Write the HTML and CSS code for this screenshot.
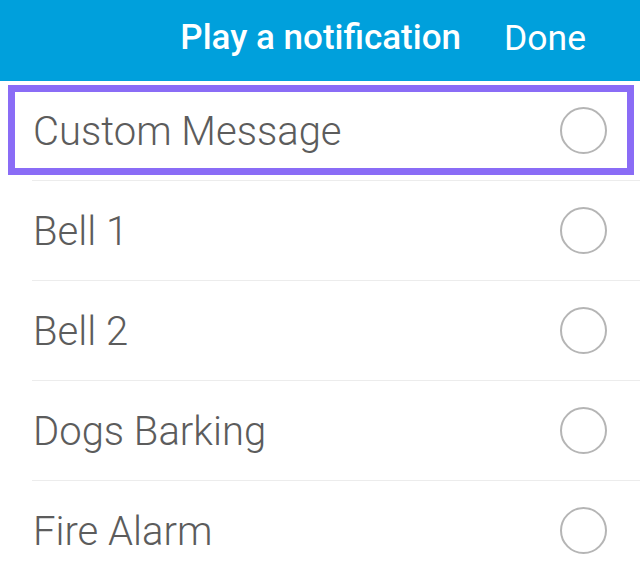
FILE: index.html
```html
<!DOCTYPE html>
<html lang="en">
<head>
    <meta charset="UTF-8">
    <meta name="viewport" content="width=device-width, initial-scale=1.0">
    <title>Play a notification</title>
    <link rel="stylesheet" href="styles.css">
</head>
<body>
    <div class="sound-picker">
        <div class="header">
            <span class="header-title">Play a notification</span>
            <button class="done-button">Done</button>
        </div>
        <ul class="options">
            <li class="option option-active">
                <div class="option-outline">
                    <span class="option-label">Custom Message</span>
                    <span class="radio"></span>
                </div>
            </li>
            <li class="option">
                <span class="option-label">Bell 1</span>
                <span class="radio"></span>
            </li>
            <li class="option">
                <span class="option-label">Bell 2</span>
                <span class="radio"></span>
            </li>
            <li class="option">
                <span class="option-label">Dogs Barking</span>
                <span class="radio"></span>
            </li>
            <li class="option">
                <span class="option-label">Fire Alarm</span>
                <span class="radio"></span>
            </li>
        </ul>
    </div>
</body>
</html>
```

FILE: styles.css
```css
body {
    margin: 0;
    font-family: Roboto, "Liberation Sans", Arial, sans-serif;
    background-color: #fff;
    color: #5c5c5c;
}

.sound-picker {
    width: 640px;
    height: 576px;
    overflow: hidden;
}

.header {
    background-color: #00a0dc;
    color: white;
    height: 81px;
    display: flex;
    justify-content: flex-end;
    align-items: center;
    padding: 0 54px 6px 0;
    box-sizing: border-box;
}

.header-title {
    font-size: 35px;
    font-weight: 500;
    margin-right: 43px;
}

.done-button {
    font-family: inherit;
    font-size: 35.5px;
    font-weight: 400;
    color: white;
    background: none;
    border: none;
    padding: 0;
    cursor: pointer;
}

.options {
    list-style: none;
    margin: 0;
    padding: 0 0 0 32px;
}

.option {
    display: flex;
    justify-content: space-between;
    align-items: center;
    height: 100px;
    box-sizing: border-box;
    padding: 0 33px 0 1px;
    border-top: 1px solid #ececec;
}

.option-active {
    display: block;
    height: auto;
    margin-left: -24px;
    padding: 4px 6px 5px 0;
    border-top: none;
}

.option-outline {
    display: flex;
    justify-content: space-between;
    align-items: center;
    height: 90px;
    box-sizing: border-box;
    padding: 0 20px 0 18px;
    border: 7px solid #8a6cf6;
}

.option-label {
    font-size: 40px;
    font-weight: 300;
    padding-top: 2px;
}

.radio {
    width: 47px;
    height: 47px;
    box-sizing: border-box;
    border: 2px solid #b5b5b5;
    border-radius: 50%;
}
```
